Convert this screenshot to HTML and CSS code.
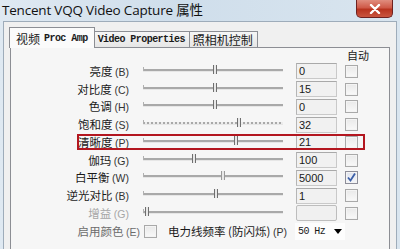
FILE: index.html
```html
<!DOCTYPE html>
<html>
<head>
<meta charset="utf-8">
<link rel="stylesheet" href="styles.css">
</head>
<body>
<div class="window">
  <div class="titlebar">
    <span class="title">Tencent VQQ Video Capture 属性</span>
    <span class="close"><svg width="12" height="10" viewBox="0 0 12 10"><path d="M2 1 L10 9 M10 1 L2 9" stroke="#fff" stroke-width="2.4" stroke-linecap="round"/></svg></span>
  </div>
  <div class="client">
    <div class="tabs">
      <div class="tab active"><span class="cjk sp">视频</span><span class="mono">Proc Amp</span></div>
      <div class="tab"><span class="mono">Video Properties</span></div>
      <div class="tab"><span class="cjk">照相机控制</span></div>
    </div>
    <div class="panel">
      <div class="grid">
        <div class="hdr-spacer"></div>
        <div class="hdr-auto">自动</div>

        <div class="lbl">亮度 <span class="key">(B)</span></div>
        <div class="slider"><i class="thumb" style="left:70px"></i></div>
        <div class="box">0</div>
        <div class="cb"></div>

        <div class="lbl">对比度 <span class="key">(C)</span></div>
        <div class="slider"><i class="thumb" style="left:70px"></i></div>
        <div class="box">15</div>
        <div class="cb"></div>

        <div class="lbl">色调 <span class="key">(H)</span></div>
        <div class="slider"><i class="thumb" style="left:70px"></i></div>
        <div class="box">0</div>
        <div class="cb"></div>

        <div class="lbl">饱和度 <span class="key">(S)</span></div>
        <div class="slider dotted"><i class="thumb" style="left:94px"></i></div>
        <div class="box">32</div>
        <div class="cb"></div>

        <div class="lbl">清晰度 <span class="key">(P)</span></div>
        <div class="slider"><i class="thumb" style="left:91px"></i></div>
        <div class="box">21</div>
        <div class="cb"></div>

        <div class="lbl">伽玛 <span class="key">(G)</span></div>
        <div class="slider"><i class="thumb" style="left:49px"></i></div>
        <div class="box">100</div>
        <div class="cb"></div>

        <div class="lbl">白平衡 <span class="key">(W)</span></div>
        <div class="slider"><i class="thumb light" style="left:78px"></i></div>
        <div class="box">5000</div>
        <div class="cb checked"><svg width="11" height="11" viewBox="0 0 11 11"><path d="M2 5.5 L4.5 8.5 L9 1.5" fill="none" stroke="#3b5fa8" stroke-width="1.8"/></svg></div>

        <div class="lbl">逆光对比 <span class="key">(B)</span></div>
        <div class="slider"><i class="thumb" style="left:71px"></i></div>
        <div class="box">1</div>
        <div class="cb"></div>

        <div class="lbl disabled">增益 <span class="key">(G)</span></div>
        <div class="slider"><i class="thumb" style="left:2px"></i></div>
        <div class="box empty"></div>
        <div class="cb"></div>
      </div>
      <div class="bottom">
        <div class="blabel">启用颜色 <span class="key">(E)</span></div>
        <div class="cb"></div>
        <div class="freq">电力线频率 (防闪烁) <span class="key">(P)</span></div>
        <div class="combo"><span class="mono">50 Hz</span><svg width="8" height="5" viewBox="0 0 8 5"><path d="M0 0 H8 L4 5 Z" fill="#000"/></svg></div>
      </div>
      <div class="highlight"></div>
    </div>
  </div>
</div>
</body>
</html>
```
FILE: styles.css
```css
html, body {
  margin: 0;
  padding: 0;
}
body {
  width: 400px;
  height: 249px;
  overflow: hidden;
  font-family: "Noto Sans CJK SC", "Noto Sans", sans-serif;
  color: #1a1a1a;
}
.window {
  width: 400px;
  height: 249px;
  background: linear-gradient(90deg, #dfe9f2 0%, #cfdeeb 45%, #d9e5ef 100%);
  display: flex;
  flex-direction: column;
}
.titlebar {
  height: 21px;
  display: flex;
  justify-content: space-between;
  align-items: flex-start;
  flex: none;
}
.title {
  font-family: "Open Sans", "Noto Sans CJK SC", sans-serif;
  font-size: 13.5px;
  line-height: 21px;
  padding-left: 2px;
  color: #111;
  letter-spacing: -0.2px;
}
.close {
  width: 37px;
  height: 18px;
  margin-right: 7px;
  box-sizing: border-box;
  border: 1px solid #6e2220;
  border-top: none;
  border-radius: 0 0 5px 5px;
  background: linear-gradient(#e08d7e 0%, #cf5a48 45%, #b8341f 55%, #c9553f 100%);
  display: flex;
  align-items: center;
  justify-content: center;
}
.client {
  flex: 1;
  margin: 0 3px 0 3px;
  background: #f0f0f0;
  border: 1px solid #9eacba;
  border-bottom: none;
  display: flex;
  flex-direction: column;
}
.tabs {
  display: flex;
  align-items: flex-end;
  height: 20px;
  margin-top: 5px;
  padding-left: 5px;
}
.tab {
  height: 16px;
  box-sizing: border-box;
  border: 1px solid #8c8e94;
  border-bottom: none;
  background: linear-gradient(#f6f6f6, #e6e6e6);
  padding: 0 4px 0 3px;
  display: flex;
  align-items: center;
  white-space: nowrap;
  font-size: 12px;
}
.tab + .tab {
  border-left: none;
}
.tab.active {
  height: 21px;
  margin-bottom: -1px;
  background: #fbfbfb;
  position: relative;
  z-index: 1;
  padding: 0 6px 0 6px;
  border-right: 1px solid #8c8e94;
}
.cjk {
  font-family: "Noto Sans CJK SC", sans-serif;
  font-size: 12px;
}
.sp {
  margin-right: 4px;
}
.mono {
  font-family: "Liberation Mono", monospace;
  font-size: 10px;
  font-weight: bold;
  letter-spacing: -0.55px;
}
.panel {
  flex: 1;
  margin: 0 6px 0 6px;
  border: 1px solid #8c8e94;
  border-bottom: none;
  background: #f6f6f6;
  position: relative;
}
.grid {
  display: grid;
  grid-template-columns: 118px 140px 40px 13px;
  column-gap: 14px;
  grid-template-rows: 14.5px repeat(9, 17.75px);
  align-items: center;
}
.hdr-spacer {
  grid-column: 1 / 4;
}
.hdr-auto {
  font-size: 11px;
  margin-left: -4px;
  white-space: nowrap;
  line-height: 14px;
}
.lbl {
  text-align: right;
  font-size: 11.5px;
  white-space: nowrap;
  line-height: 16px;
}
.key {
  font-family: "Liberation Sans", sans-serif;
  font-size: 10.5px;
  color: #333;
}
.disabled, .disabled .key {
  color: #a6a6a6;
}
.slider {
  position: relative;
  height: 2px;
  background: #a9a9a9;
  border-bottom: 1px solid #e6e6e6;
  margin-top: -2px;
}
.slider::before {
  content: "";
  position: absolute;
  left: 0;
  top: -2px;
  width: 1px;
  height: 4px;
  background: #b0b0b0;
}
.slider.dotted {
  background: repeating-linear-gradient(90deg, #a9a9a9 0 2px, #ececec 2px 4px);
}
.thumb {
  position: absolute;
  top: -4px;
  width: 2px;
  height: 9px;
  border-left: 1px solid #6f6f6f;
  border-right: 1px solid #6f6f6f;
  background: #e8e8e8;
}
.thumb.light {
  border-color: #9a9a9a;
}
.box {
  height: 16px;
  box-sizing: border-box;
  border: 1px solid #c9c9c9;
  border-top-color: #a9a9a9;
  border-left-color: #b5b5b5;
  background: #f1f1f1;
  font-family: "Liberation Sans", sans-serif;
  font-size: 11px;
  line-height: 14px;
  padding-left: 2px;
  margin-left: -1px;
}
.box.empty {
  border-radius: 2px;
  border-color: #bdbdbd;
  background: #f0f0f0;
}
.cb {
  width: 13px;
  height: 13px;
  box-sizing: border-box;
  border: 1px solid #a9a9a9;
  background: linear-gradient(#e9e9e9, #f9f9f9);
  box-shadow: inset 0 0 0 1px #f4f4f4;
  margin-left: -6px;
  display: flex;
  align-items: center;
  justify-content: center;
}
.cb.checked {
  border-color: #8d8d99;
  background: linear-gradient(#dfe3ee, #f4f6fa);
}
.bottom {
  display: flex;
  align-items: center;
  height: 18px;
}
.blabel {
  width: 129px;
  text-align: right;
  font-size: 11.5px;
  color: #6c6c6c;
  white-space: nowrap;
}
.blabel .key {
  color: #6c6c6c;
}
.bottom .cb {
  margin-left: 4px;
}
.freq {
  margin-left: 11px;
  width: 127px;
  font-size: 11.5px;
  white-space: nowrap;
}
.combo {
  width: 50px;
  height: 17px;
  box-sizing: border-box;
  background: #fdfdfd;
  display: flex;
  align-items: center;
  justify-content: space-between;
  padding: 0 3px 0 3px;
}
.combo .mono {
  font-weight: normal;
}
.highlight {
  position: absolute;
  left: 66px;
  top: 86px;
  width: 288px;
  height: 16px;
  box-sizing: border-box;
  border: 2px solid #b3161f;
}
```
